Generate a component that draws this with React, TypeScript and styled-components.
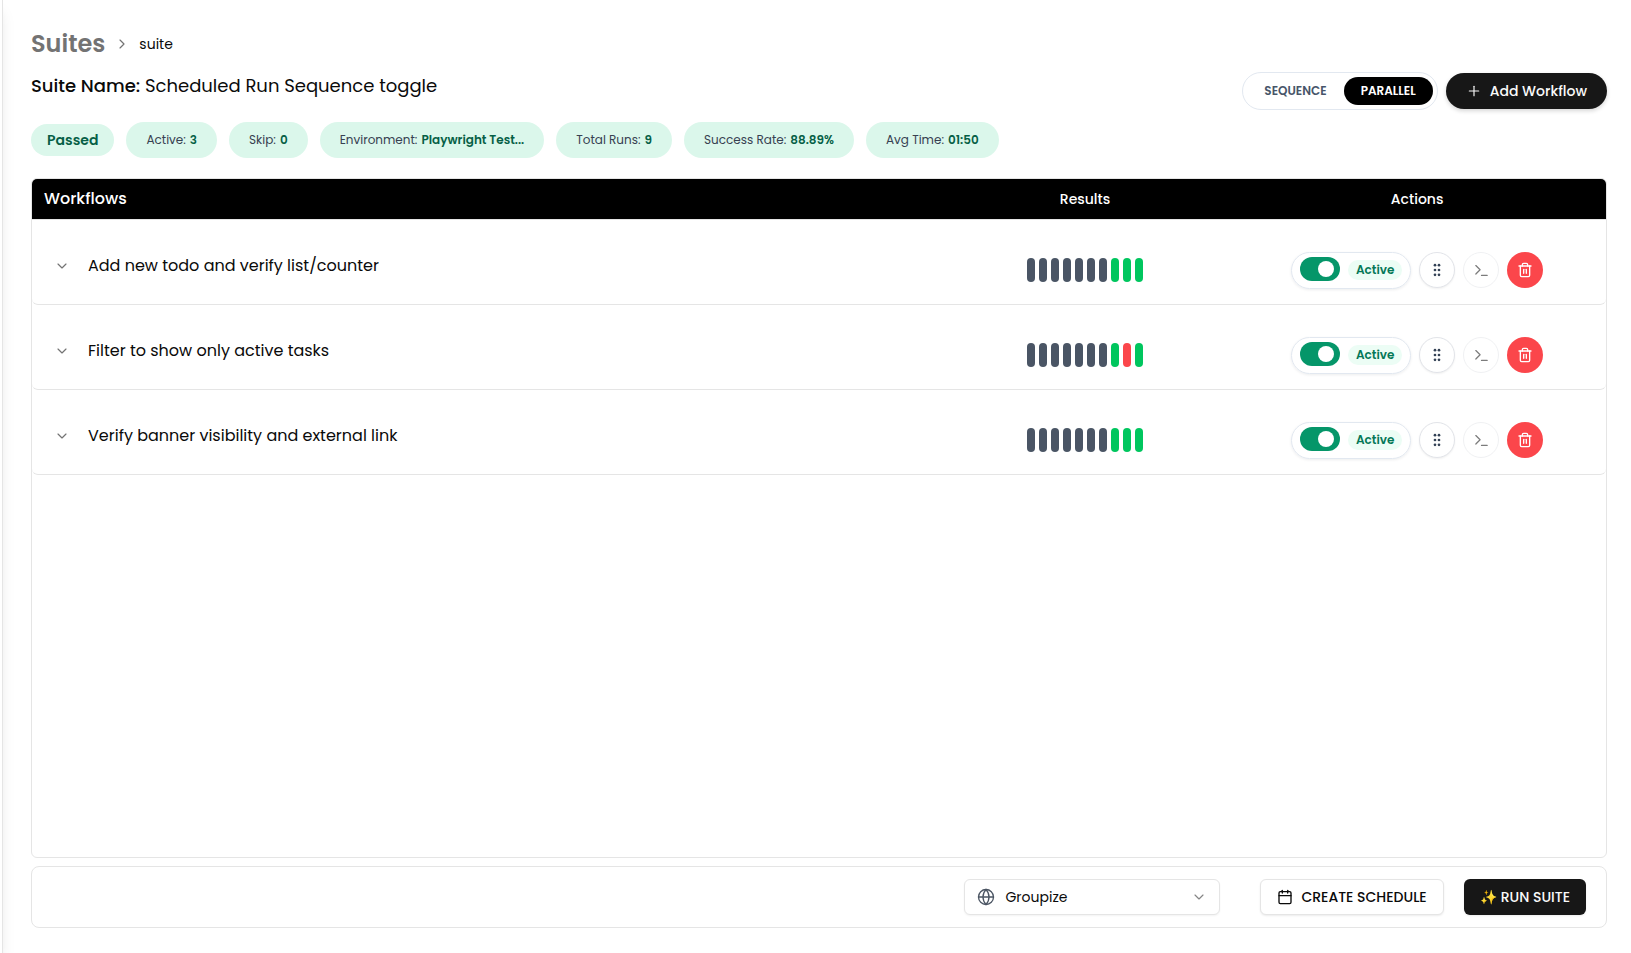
import React, { useState } from "react";
import styled, { createGlobalStyle } from "styled-components";
import {
  Calendar,
  ChevronDown,
  ChevronRight,
  Globe,
  Plus,
  Terminal,
  Trash2,
} from "lucide-react";

const GlobalStyle = createGlobalStyle`
  *, *::before, *::after { box-sizing: border-box; }
  body {
    margin: 0;
    background: #ffffff;
    color: #0a0a0a;
    font-family: Poppins, Inter, "Liberation Sans", sans-serif;
    font-size: 14px;
    line-height: 20px;
  }
  button, select, input { font: inherit; color: inherit; margin: 0; }
  button { cursor: pointer; }
`;

const Shell = styled.div`
  display: flex;
  min-height: 100vh;
`;

const SidebarEdge = styled.aside`
  flex: none;
  width: 64px;
  margin-left: -61px;
  border-right: 1px solid #e5e5e5;
  background: #ffffff;
  box-shadow: 0 10px 15px -3px rgba(0, 0, 0, 0.1), 0 4px 6px -4px rgba(0, 0, 0, 0.1);
`;

const Main = styled.main`
  flex: 1;
  min-width: 0;
  display: flex;
  flex-direction: column;
  padding: 28px 24px 25px 28px;
`;

const Breadcrumb = styled.nav`
  display: flex;
  align-items: center;
  gap: 9px;
  margin-bottom: 12px;
  line-height: 32px;

  svg { color: #737373; }
`;

const CrumbLink = styled.a`
  color: #737373;
  font-size: 24px;
  font-weight: 600;
  text-decoration: none;
`;

const Header = styled.header`
  display: flex;
  justify-content: space-between;
  align-items: flex-start;
  margin-bottom: 20px;
`;

const Summary = styled.div`
  display: flex;
  flex-direction: column;
  gap: 22px;
`;

const SuiteName = styled.h1`
  margin: 0;
  font-size: 18px;
  line-height: 28px;
  font-weight: 400;

  strong { font-weight: 500; }
`;

const Chips = styled.div`
  display: flex;
  align-items: center;
  flex-wrap: wrap;
  gap: 12px;
`;

const StatusChip = styled.span`
  padding: 0 16px;
  border-radius: 16px;
  background: #dbf7eb;
  color: #065f46;
  font-size: 14px;
  font-weight: 600;
  line-height: 32px;
`;

const Chip = styled.span`
  display: flex;
  gap: 4px;
  padding: 0 20px;
  border-radius: 18px;
  background: #dbf7eb;
  color: #374151;
  font-size: 12px;
  line-height: 36px;

  strong { color: #065f46; font-weight: 600; }
`;

const HeaderActions = styled.div`
  display: flex;
  align-items: center;
  gap: 8px;
`;

const ModeGroup = styled.div`
  display: flex;
  padding: 4px;
  border: 1px solid #e2e8f0;
  border-radius: 19px;
`;

const ModeButton = styled.button<{ $on: boolean }>`
  height: 28px;
  padding: 0 17px;
  border: 0;
  border-radius: 14px;
  background: ${(p) => (p.$on ? "#000000" : "transparent")};
  color: ${(p) => (p.$on ? "#ffffff" : "#475569")};
  font-size: 12px;
  font-weight: 600;
`;

const AddButton = styled.button`
  display: flex;
  align-items: center;
  gap: 8px;
  height: 36px;
  padding: 0 20px;
  border: 0;
  border-radius: 18px;
  background: #171717;
  color: #fafafa;
  font-weight: 500;
  box-shadow: 0 2px 4px rgba(0, 0, 0, 0.16);
`;

const TableCard = styled.section`
  flex: 1;
  border: 1px solid #e5e5e5;
  border-radius: 6px;
  overflow: hidden;
`;

const Table = styled.table`
  width: 100%;
  table-layout: fixed;
  border-collapse: separate;
  border-spacing: 0;
`;

const HeadCell = styled.th<{ $width?: string }>`
  width: ${(p) => p.$width ?? "auto"};
  height: 41px;
  padding: 0 12px;
  border-bottom: 1px solid #e5e5e5;
  background: #000000;
  background-clip: padding-box;
  color: #ffffff;
  font-size: 14px;
  font-weight: 500;
  text-align: center;

  &:first-child { font-size: 16px; text-align: left; }
`;

const Cell = styled.td`
  height: 85px;
  padding: 32px 12px 15px;
  border-bottom: 1px solid #e5e5e5;
  vertical-align: top;

  &:first-child { border-bottom-left-radius: 6px; }
  &:last-child { border-bottom-right-radius: 6px; }
`;

const TitleLine = styled.div`
  display: flex;
  align-items: center;
  gap: 8px;
  font-size: 16px;
  line-height: 26px;
`;

const ExpandButton = styled.button`
  display: grid;
  place-items: center;
  width: 36px;
  height: 28px;
  padding: 0;
  border: 0;
  background: none;
  color: #737373;
`;

const Bars = styled.div`
  display: flex;
  justify-content: center;
  gap: 4px;
  padding: 6px 0;
`;

const Bar = styled.span<{ $color: string }>`
  width: 8px;
  height: 24px;
  border-radius: 4px;
  background: ${(p) => p.$color};
`;

const RowActions = styled.div`
  display: flex;
  justify-content: center;
  gap: 8px;
`;

const SwitchPill = styled.label`
  display: flex;
  align-items: center;
  gap: 8px;
  height: 37px;
  padding: 4px 8px 5px;
  border: 1px solid #e2e8f0;
  border-radius: 19px;
  box-shadow: 0 1px 3px rgba(15, 23, 42, 0.08);
  cursor: pointer;
`;

const Switch = styled.input`
  appearance: none;
  align-self: flex-start;
  display: flex;
  align-items: center;
  justify-content: flex-start;
  width: 40px;
  height: 24px;
  padding: 0 6px;
  border-radius: 12px;
  background: #cbd5e1;

  &::before {
    content: "";
    width: 16px;
    height: 16px;
    border-radius: 8px;
    background: #ffffff;
  }
  &:checked { justify-content: flex-end; background: #059669; }
`;

const StateTag = styled.span`
  width: 54px;
  border-radius: 10px;
  background: #ecfdf5;
  color: #047857;
  font-size: 12px;
  font-weight: 600;
  line-height: 20px;
  text-align: center;
`;

const RoundButton = styled.button<{ $tone: "plain" | "muted" | "danger" }>`
  display: grid;
  place-items: center;
  width: 36px;
  height: 36px;
  padding: 0;
  border: ${(p) => (p.$tone === "danger" ? "0" : "1px solid #e2e4e9")};
  border-radius: 18px;
  background: ${(p) => (p.$tone === "danger" ? "#fb464b" : "#ffffff")};
  color: ${(p) => (p.$tone === "danger" ? "#ffffff" : "#334155")};
  box-shadow: ${(p) => (p.$tone === "plain" ? "0 1px 2px rgba(0, 0, 0, 0.06)" : "none")};

  &:disabled {
    border-color: #f0f1f3;
    color: #7c7c7c;
    cursor: default;
  }
`;

const Footer = styled.footer`
  display: flex;
  justify-content: flex-end;
  align-items: center;
  gap: 20px;
  margin-top: 8px;
  padding: 12px 20px;
  border: 1px solid #e5e5e5;
  border-radius: 8px;
`;

const SelectBox = styled.label`
  display: grid;
  align-items: center;
  width: 256px;
  margin-right: 20px;

  > * { grid-area: 1 / 1; }
  > svg { pointer-events: none; margin: 0 13px; color: #4b5563; }
  > svg:last-child { justify-self: end; color: #858585; }
`;

const Select = styled.select`
  appearance: none;
  width: 100%;
  height: 36px;
  padding: 0 40px;
  border: 1px solid #e5e5e5;
  border-radius: 6px;
  background: #ffffff;
  box-shadow: 0 1px 2px rgba(0, 0, 0, 0.05);
`;

const FooterButton = styled.button<{ $dark?: boolean }>`
  display: flex;
  align-items: center;
  gap: ${(p) => (p.$dark ? "4px" : "8px")};
  height: 36px;
  padding: 0 16px;
  border: ${(p) => (p.$dark ? "0" : "1px solid #e5e5e5")};
  border-radius: 6px;
  background: ${(p) => (p.$dark ? "#171717" : "#ffffff")};
  color: ${(p) => (p.$dark ? "#fafafa" : "#0a0a0a")};
  font-weight: 500;
  box-shadow: 0 1px 2px rgba(0, 0, 0, 0.08);
`;

function DragDots() {
  return (
    <svg width="16" height="16" viewBox="0 0 16 16" fill="currentColor" aria-hidden="true">
      {[3.2, 8, 12.8].map((y) => (
        <React.Fragment key={y}>
          <circle cx="6" cy={y} r="1.35" />
          <circle cx="10" cy={y} r="1.35" />
        </React.Fragment>
      ))}
    </svg>
  );
}

const BAR_COLORS: Record<string, string> = {
  n: "#4a5565",
  p: "#00c65e",
  f: "#fb464b",
};

const STATS: [string, string][] = [
  ["Active:", "3"],
  ["Skip:", "0"],
  ["Environment:", "Playwright Test..."],
  ["Total Runs:", "9"],
  ["Success Rate:", "88.89%"],
  ["Avg Time:", "01:50"],
];

const WORKFLOWS = [
  { name: "Add new todo and verify list/counter", runs: "nnnnnnnppp" },
  { name: "Filter to show only active tasks", runs: "nnnnnnnpfp" },
  { name: "Verify banner visibility and external link", runs: "nnnnnnnppp" },
];

function WorkflowRow({ name, runs }: { name: string; runs: string }) {
  return (
    <tr>
      <Cell>
        <TitleLine>
          <ExpandButton aria-label={`Expand ${name}`}>
            <ChevronDown size={16} strokeWidth={1.75} />
          </ExpandButton>
          {name}
        </TitleLine>
      </Cell>
      <Cell>
        <Bars>
          {[...runs].map((run, i) => (
            <Bar key={i} $color={BAR_COLORS[run]} />
          ))}
        </Bars>
      </Cell>
      <Cell>
        <RowActions>
          <SwitchPill>
            <Switch type="checkbox" role="switch" defaultChecked />
            <StateTag>Active</StateTag>
          </SwitchPill>
          <RoundButton $tone="plain" aria-label="Reorder">
            <DragDots />
          </RoundButton>
          <RoundButton $tone="muted" aria-label="Console" disabled>
            <Terminal size={17} strokeWidth={1.75} />
          </RoundButton>
          <RoundButton $tone="danger" aria-label="Delete">
            <Trash2 size={16} strokeWidth={2} />
          </RoundButton>
        </RowActions>
      </Cell>
    </tr>
  );
}

export default function App() {
  const [mode, setMode] = useState("PARALLEL");

  return (
    <>
      <GlobalStyle />
      <Shell>
        <SidebarEdge />
        <Main>
          <Breadcrumb aria-label="Breadcrumb">
            <CrumbLink href="#suites">Suites</CrumbLink>
            <ChevronRight size={16} strokeWidth={1.75} />
            <span>suite</span>
          </Breadcrumb>

          <Header>
            <Summary>
              <SuiteName>
                <strong>Suite Name:</strong> Scheduled Run Sequence toggle
              </SuiteName>
              <Chips>
                <StatusChip>Passed</StatusChip>
                {STATS.map(([label, value]) => (
                  <Chip key={label}>
                    {label} <strong>{value}</strong>
                  </Chip>
                ))}
              </Chips>
            </Summary>
            <HeaderActions>
              <ModeGroup role="group" aria-label="Run mode">
                {["SEQUENCE", "PARALLEL"].map((m) => (
                  <ModeButton
                    key={m}
                    $on={mode === m}
                    aria-pressed={mode === m}
                    onClick={() => setMode(m)}
                  >
                    {m}
                  </ModeButton>
                ))}
              </ModeGroup>
              <AddButton>
                <Plus size={16} strokeWidth={1.75} />
                Add Workflow
              </AddButton>
            </HeaderActions>
          </Header>

          <TableCard>
            <Table>
              <thead>
                <tr>
                  <HeadCell>Workflows</HeadCell>
                  <HeadCell $width="18.2%">Results</HeadCell>
                  <HeadCell $width="24%">Actions</HeadCell>
                </tr>
              </thead>
              <tbody>
                {WORKFLOWS.map((w) => (
                  <WorkflowRow key={w.name} {...w} />
                ))}
              </tbody>
            </Table>
          </TableCard>

          <Footer>
            <SelectBox>
              <Select aria-label="Environment" defaultValue="Groupize">
                <option>Groupize</option>
              </Select>
              <Globe size={18} strokeWidth={1.75} />
              <ChevronDown size={16} strokeWidth={1.75} />
            </SelectBox>
            <FooterButton>
              <Calendar size={16} />
              CREATE SCHEDULE
            </FooterButton>
            <FooterButton $dark>
              <span aria-hidden="true">✨</span>
              RUN SUITE
            </FooterButton>
          </Footer>
        </Main>
      </Shell>
    </>
  );
}
